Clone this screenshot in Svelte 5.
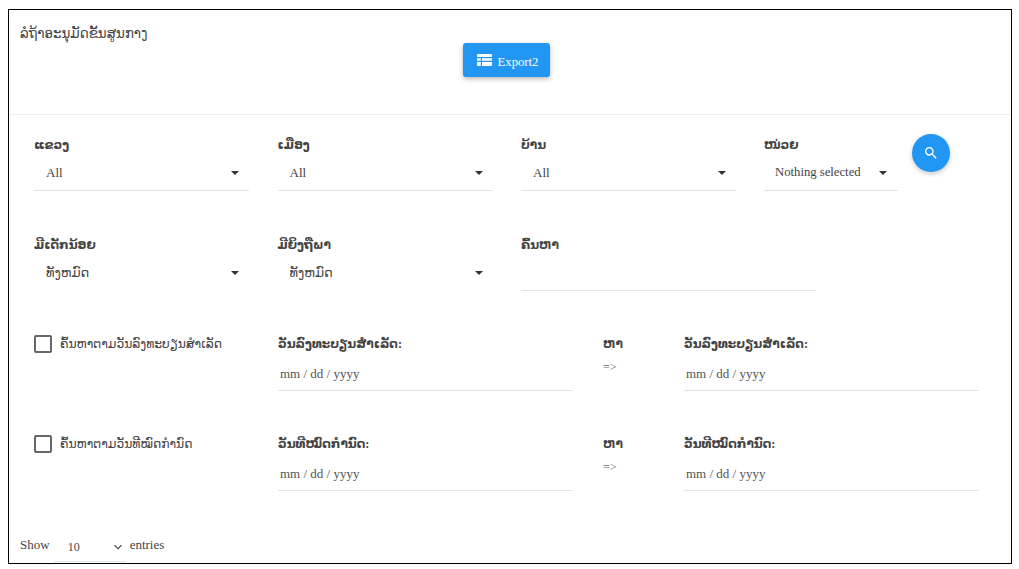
<script>
	const topFilters = [
		{ label: 'ແຂວງ', value: 'All' },
		{ label: 'ເມືອງ', value: 'All' },
		{ label: 'ບ້ານ', value: 'All' }
	];

	const kidFilters = [
		{ label: 'ມີເດັກນ້ອຍ', value: 'ທັງຫມົດ' },
		{ label: 'ມີຍິງຖືພາ', value: 'ທັງຫມົດ' }
	];

	const dateRows = [
		{ check: 'ຄົ້ນຫາຕາມວັນລົງທະບຽນສຳເລັດ', label: 'ວັນລົງທະບຽນສຳເລັດ:' },
		{ check: 'ຄົ້ນຫາຕາມວັນທີໝົດກຳນົດ', label: 'ວັນທີໝົດກຳນົດ:' }
	];
</script>

<div class="page">
	<div class="card">
		<header class="card-head">
			<div class="title">ລໍຖ້າອະນຸມັດຂັ້ນສູນກາງ</div>
			<div class="head-actions">
				<button class="export">
					<svg width="15" height="12" viewBox="0 0 15 12" aria-hidden="true">
						<path
							fill="#fff"
							d="M0 1.2Q0 0 1.2 0H13.8Q15 0 15 1.2V3H0ZM0 4.2H3.8V6.8H0ZM5 4.2H15V6.8H5ZM0 8H3.8V12H1.2Q0 12 0 10.8ZM5 8H15V10.8Q15 12 13.8 12H5Z"
						/>
					</svg>
					<span>Export2</span>
				</button>
			</div>
		</header>

		<section class="filters">
			<div class="row">
				{#each topFilters as f}
					<div class="field">
						<div class="label">{f.label}</div>
						<div class="select lined">
							<span>{f.value}</span>
							<i class="caret"></i>
						</div>
					</div>
				{/each}
				<div class="field unit">
					<div class="unit-col">
						<div class="label">ໜ່ວຍ</div>
						<div class="select lined short">
							<span>Nothing selected</span>
							<i class="caret"></i>
						</div>
					</div>
					<button class="search" aria-label="search">
						<svg width="16" height="16" viewBox="0 0 24 24" aria-hidden="true">
							<path
								fill="#fff"
								d="M15.5 14h-.79l-.28-.27A6.47 6.47 0 0 0 16 9.5 6.5 6.5 0 1 0 9.5 16c1.61 0 3.09-.59 4.23-1.57l.27.28v.79l5 4.99L20.49 19l-4.99-5zm-6 0C7.01 14 5 11.99 5 9.5S7.01 5 9.5 5 14 7.01 14 9.5 11.99 14 9.5 14z"
							/>
						</svg>
					</button>
				</div>
			</div>

			<div class="row second">
				{#each kidFilters as f}
					<div class="field">
						<div class="label">{f.label}</div>
						<div class="select">
							<span>{f.value}</span>
							<i class="caret"></i>
						</div>
					</div>
				{/each}
				<div class="field wide">
					<div class="label">ຄົ້ນຫາ</div>
					<input class="text-input" type="text" />
				</div>
			</div>

			{#each dateRows as d}
				<div class="date-row">
					<label class="check">
						<span class="box"></span>
						<span>{d.check}</span>
					</label>
					<div class="date-field">
						<div class="label">{d.label}</div>
						<input class="date-input" type="text" placeholder="mm / dd / yyyy" />
					</div>
					<div class="to">
						<div class="label">ຫາ</div>
						<div class="arrow">=&gt;</div>
					</div>
					<div class="date-field">
						<div class="label">{d.label}</div>
						<input class="date-input" type="text" placeholder="mm / dd / yyyy" />
					</div>
				</div>
			{/each}
		</section>

		<footer class="length">
			<span>Show</span>
			<div class="length-select">
				<span>10</span>
				<svg width="10" height="6" viewBox="0 0 10 6" aria-hidden="true">
					<path d="M1.5 1.2l3.5 3.5 3.5-3.5" fill="none" stroke="#444" stroke-width="1.2" />
				</svg>
			</div>
			<span>entries</span>
		</footer>
	</div>
</div>

<style>
	:global(body) {
		background: #fff;
	}

	.page {
		width: 1019px;
		height: 569px;
		padding: 9px 7px 5px 8px;
		box-sizing: border-box;
		font-family: 'Liberation Serif', 'DejaVu Sans', serif;
		color: #444;
		font-size: 13px;
		overflow: hidden;
	}

	.card {
		height: 100%;
		box-sizing: border-box;
		border: 1px solid #000;
		overflow: hidden;
		display: flex;
		flex-direction: column;
	}

	.card-head {
		height: 105px;
		flex: none;
		box-sizing: border-box;
		padding: 15px 11px 0;
		border-bottom: 1px solid #f0f0f0;
	}

	.title {
		font-size: 13.4px;
		line-height: 18px;
		height: 18px;
	}

	.head-actions {
		display: flex;
		justify-content: center;
		padding-right: 8px;
	}

	.export {
		width: 87px;
		height: 34px;
		display: flex;
		align-items: center;
		justify-content: center;
		gap: 6px;
		border: 0;
		border-radius: 3px;
		background: #2196f3;
		color: #fff;
		font-family: inherit;
		font-size: 12.7px;
		padding: 0 0 0 3px;
		box-shadow: 0 2px 5px rgba(0, 0, 0, 0.28);
	}

	.export span {
		margin-top: 4px;
	}

	.filters {
		flex: none;
		padding: 20px 0 0 25px;
	}

	.row,
	.date-row {
		height: 100px;
		display: grid;
	}

	.row {
		grid-template-columns: 243.5px 243.5px 243px 1fr;
	}

	.row.second {
		height: 99px;
	}

	.date-row {
		grid-template-columns: 244px 325px 80px 296px;
	}

	.date-row > :last-child {
		margin-left: 1px;
	}

	.label {
		font-size: 12.2px;
		font-weight: bold;
		line-height: 20px;
		color: #444;
	}

	.field {
		width: 215px;
	}

	.field.wide {
		width: 295px;
	}

	.field.unit {
		width: 100%;
		display: flex;
		align-items: flex-start;
	}

	.unit-col {
		width: 134px;
	}

	.select {
		height: 36px;
		display: flex;
		align-items: center;
		justify-content: space-between;
		box-sizing: border-box;
		padding: 0 10px 0 12px;
	}

	.select.lined {
		border-bottom: 1px solid #e4e4e4;
	}

	.select.short {
		padding: 0 11px;
		font-size: 12.7px;
	}

	.caret {
		width: 0;
		height: 0;
		border-left: 4px solid transparent;
		border-right: 4px solid transparent;
		border-top: 4px solid #333;
	}

	.search {
		width: 38px;
		height: 38px;
		margin: -1px 0 0 14px;
		border: 0;
		border-radius: 50%;
		padding: 0;
		background: #2196f3;
		display: flex;
		align-items: center;
		justify-content: center;
		box-shadow: 0 2px 5px rgba(0, 0, 0, 0.22);
	}

	.text-input,
	.date-input {
		display: block;
		width: 100%;
		box-sizing: border-box;
		height: 36px;
		border: 0;
		border-bottom: 1px solid #e4e4e4;
		outline: 0;
		background: transparent;
		font-family: inherit;
		font-size: 13px;
		padding: 0 3px 0 2px;
	}

	.date-input {
		height: 37px;
		padding-top: 3px;
	}

	.date-input::placeholder {
		color: #555;
		opacity: 1;
	}

	.check {
		display: flex;
		align-items: flex-start;
		gap: 8px;
		line-height: 20px;
		font-size: 12.3px;
	}

	.box {
		width: 14px;
		height: 14px;
		flex: none;
		border: 2px solid #666;
		border-radius: 2px;
		margin-top: 1px;
	}

	.date-field {
		width: 295px;
	}

	.to .arrow {
		font-size: 12px;
		line-height: 14px;
		margin-top: 6px;
		color: #666;
	}

	.length {
		height: 30px;
		flex: none;
		padding: 0 0 0 11px;
		display: flex;
		align-items: flex-start;
		gap: 4px;
		line-height: 16px;
		margin-top: 3px;
	}

	.length-select {
		width: 72px;
		height: 30px;
		margin-top: -5px;
		box-sizing: border-box;
		border-bottom: 1px solid #e4e4e4;
		display: flex;
		align-items: center;
		justify-content: space-between;
		padding: 0 3px 0 14px;
		font-size: 12px;
	}
</style>
